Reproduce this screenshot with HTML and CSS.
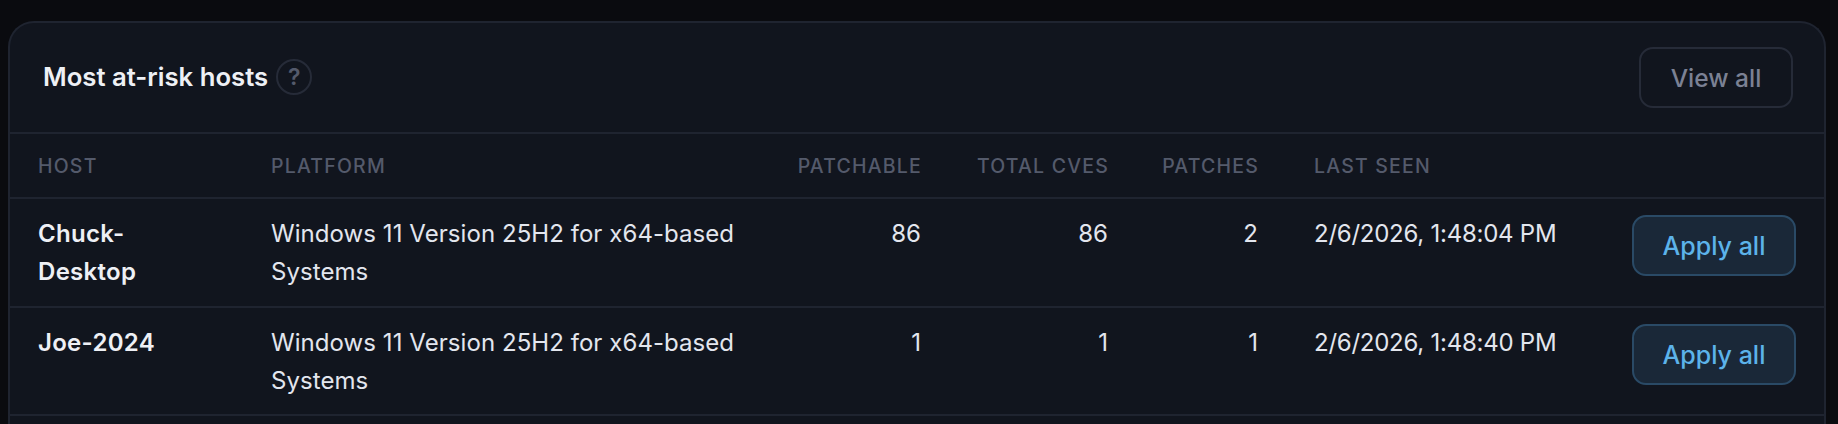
FILE: index.html
```html
<!DOCTYPE html>
<html lang="en">
<head>
<meta charset="utf-8">
<title>Most at-risk hosts</title>
<link rel="stylesheet" href="styles.css">
</head>
<body>
<section class="card">
  <header class="card-head">
    <div class="title-wrap">
      <h2 class="title">Most at-risk hosts</h2>
      <span class="help">?</span>
    </div>
    <button class="btn-ghost">View all</button>
  </header>
  <table class="hosts">
    <colgroup>
      <col class="c-host"><col class="c-platform"><col class="c-patchable"><col class="c-total"><col class="c-patches"><col class="c-seen"><col class="c-action">
    </colgroup>
    <thead>
      <tr>
        <th>HOST</th><th>PLATFORM</th><th class="num">PATCHABLE</th><th class="num">TOTAL CVES</th><th class="num">PATCHES</th><th>LAST SEEN</th><th></th>
      </tr>
    </thead>
    <tbody>
      <tr class="row-first">
        <td class="host">Chuck-Desktop</td>
        <td class="platform">Windows 11 Version 25H2 for x64-based Systems</td>
        <td class="num">86</td><td class="num">86</td><td class="num">2</td>
        <td class="seen">2/6/2026, 1:48:04 PM</td>
        <td class="action"><button class="btn-apply">Apply all</button></td>
      </tr>
      <tr>
        <td class="host">Joe-2024</td>
        <td class="platform">Windows 11 Version 25H2 for x64-based Systems</td>
        <td class="num">1</td><td class="num">1</td><td class="num">1</td>
        <td class="seen">2/6/2026, 1:48:40 PM</td>
        <td class="action"><button class="btn-apply">Apply all</button></td>
      </tr>
    </tbody>
  </table>
</section>
</body>
</html>
```
FILE: styles.css
```css
* { box-sizing: border-box; }
html, body { height: 100%; }
body {
  margin: 0;
  padding: 21px 12px 0 8px;
  background: #0a0b0f;
  font-family: "Inter", "Noto Sans", sans-serif;
  color: #e3e6ee;
  overflow: hidden;
}
.card {
  background: #11151e;
  border: 2px solid #1f2430;
  border-bottom: 0;
  border-radius: 26px 26px 0 0;
  height: 403px;
}
.card-head {
  display: flex;
  align-items: center;
  justify-content: space-between;
  height: 111px;
  padding: 0 31px 0 33px;
  border-bottom: 2px solid #1f2430;
}
.title-wrap { display: flex; align-items: center; gap: 8px; margin-bottom: 2px; }
.title { margin: 0; font-size: 25.7px; font-weight: 600; color: #eef0f5; }
.help {
  width: 36px; height: 36px;
  border: 2px solid #262b38;
  border-radius: 50%;
  display: flex; align-items: center; justify-content: center;
  font-size: 23px; font-weight: 600; color: #545a6b;
}
button { font-family: inherit; cursor: pointer; }
.btn-ghost {
  width: 154px; height: 61px;
  background: transparent;
  border: 2px solid #262b38;
  border-radius: 14px;
  font-size: 24.5px; font-weight: 500;
  color: #7b8194;
}
.hosts { width: 100%; table-layout: fixed; border-collapse: collapse; }
.c-host { width: 233px; }
.c-platform { width: 533px; }
.c-patchable { width: 173px; }
.c-total { width: 187px; }
.c-patches { width: 150px; }
.c-seen { width: 320px; }
th {
  height: 64px;
  padding: 0 28px;
  text-align: left;
  white-space: nowrap;
  font-size: 19.5px;
  font-weight: 500;
  letter-spacing: 1.2px;
  color: #545a6b;
  border-bottom: 2px solid #1f2430;
}
td {
  height: 108px;
  padding: 16px 28px 0;
  vertical-align: top;
  font-size: 24px;
  line-height: 38px;
  font-weight: 400;
  border-bottom: 2px solid #1f2430;
}
.row-first td { height: 109px; }
th.num { padding-left: 0; padding-right: 27px; }
.num { text-align: right; }
.host { font-weight: 600; color: #eef0f5; letter-spacing: 0.3px; }
.platform { letter-spacing: 0.06px; }
.seen { letter-spacing: -0.25px; }
td.action { padding: 16px 28px 0 0; text-align: right; }
.btn-apply {
  width: 164px; height: 61px;
  background: #1a2838;
  border: 2px solid #2a4a66;
  border-radius: 14px;
  font-size: 25px; font-weight: 500;
  color: #5cb3ea;
}
```
